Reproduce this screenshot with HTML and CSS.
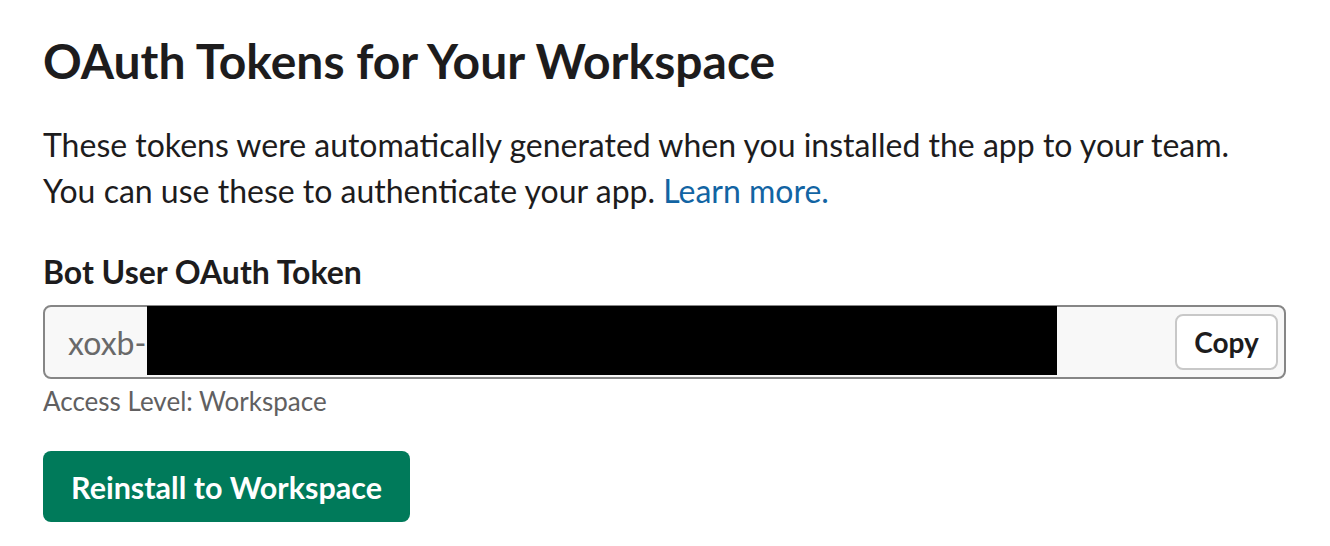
FILE: index.html
```html
<!DOCTYPE html>
<html>
<head>
<meta charset="utf-8">
<link rel="stylesheet" href="styles.css">
</head>
<body>
<div class="page">
  <h1 class="title">OAuth Tokens for Your Workspace</h1>
  <p class="desc">These tokens were automatically generated when you installed the app to your team.<br>You can use these to authenticate your app. <a class="link" href="#">Learn more.</a></p>
  <div class="label">Bot User OAuth Token</div>
  <div class="token-field">
    <span class="token-prefix">xoxb-</span>
    <span class="redact"></span>
    <span class="spacer"></span>
    <button class="copy-btn">Copy</button>
  </div>
  <div class="hint">Access Level: Workspace</div>
  <button class="primary-btn">Reinstall to Workspace</button>
</div>
</body>
</html>
```
FILE: styles.css
```css
html, body {
  margin: 0;
  padding: 0;
  background: #ffffff;
}
.page {
  font-family: Lato, "Noto Sans", sans-serif;
  color: #1d1c1d;
  padding: 32px 0 0 43px;
  width: 1243px;
}
.title {
  margin: 0;
  font-size: 48px;
  line-height: 58px;
  font-weight: 700;
}
.desc {
  margin: 32px 0 0 0;
  font-size: 32px;
  line-height: 46px;
}
.link {
  color: #1264a3;
  text-decoration: none;
}
.label {
  margin-top: 39px;
  font-size: 32px;
  line-height: 38px;
  font-weight: 700;
}
.token-field {
  margin-top: 14px;
  box-sizing: border-box;
  height: 74px;
  border: 2px solid #868686;
  border-radius: 8px;
  background: #f8f8f8;
  display: flex;
  align-items: center;
  padding: 0 6px 0 23px;
}
.token-prefix {
  font-size: 32px;
  color: #696969;
}
.redact {
  align-self: stretch;
  width: 910px;
  background: #000;
  margin-left: 1px;
  margin-top: -1px;
  margin-bottom: 2px;
}
.spacer {
  flex: 1;
}
.copy-btn {
  font-family: Lato, "Noto Sans", sans-serif;
  font-weight: 700;
  font-size: 28px;
  color: #1d1c1d;
  background: #ffffff;
  border: 2px solid #c8c8c8;
  border-radius: 8px;
  height: 56px;
  width: 103px;
  padding: 0;
}
.hint {
  margin-top: 7px;
  font-size: 26px;
  line-height: 31px;
  color: #616061;
}
.primary-btn {
  margin-top: 34px;
  font-family: Lato, "Noto Sans", sans-serif;
  font-weight: 700;
  font-size: 30.5px;
  color: #ffffff;
  background: #007a5a;
  border: none;
  border-radius: 8px;
  height: 71px;
  width: 367px;
  padding: 0;
}
```
